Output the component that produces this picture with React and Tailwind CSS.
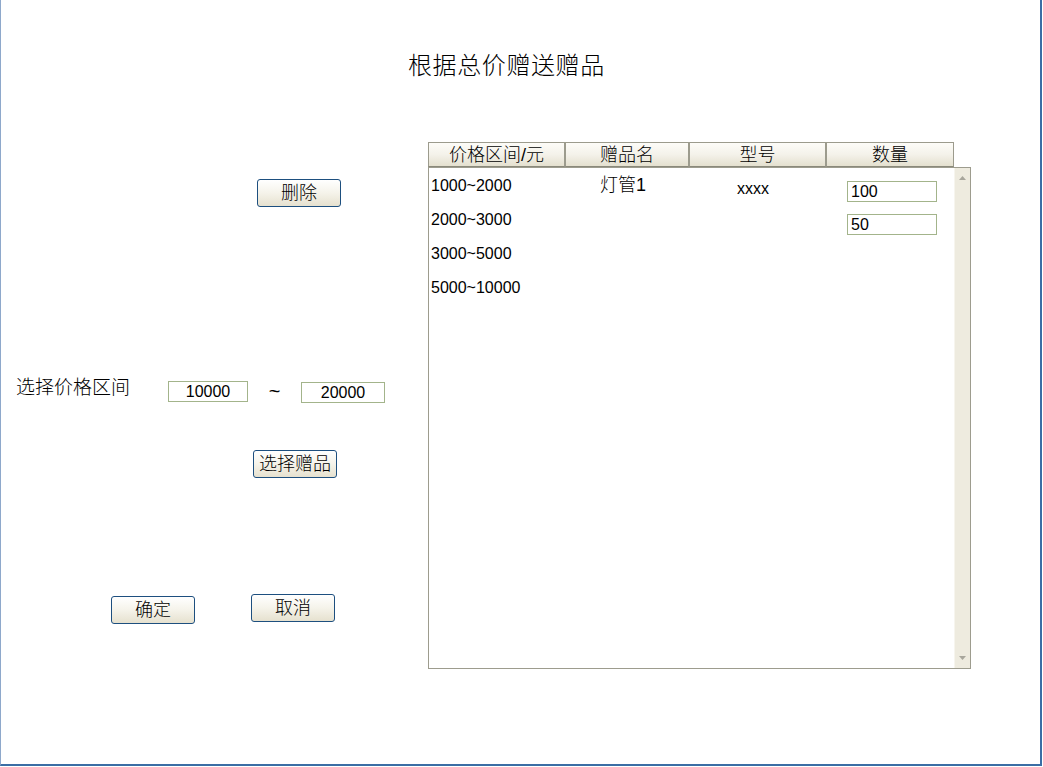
import React from "react";

const font = { fontFamily: '"Liberation Sans", "Noto Sans CJK SC", sans-serif' };

const rows = [
  { range: "1000~2000", name: "灯管1", model: "xxxx", qty: "100" },
  { range: "2000~3000", name: "", model: "", qty: "50" },
  { range: "3000~5000", name: "", model: "", qty: null },
  { range: "5000~10000", name: "", model: "", qty: null },
];

const XpButton = ({ children, className = "" }) => (
  <button
    type="button"
    className={
      "w-[84px] h-[28px] rounded-[3px] border border-[#1d4f7f] bg-gradient-to-b from-[#ffffff] via-[#f5f3ea] to-[#e6e1cf] text-[18px] leading-[26px] font-light text-black " +
      className
    }
  >
    {children}
  </button>
);

const HeaderCell = ({ children, w }) => (
  <div
    className={
      "h-[25px] flex items-center justify-center border border-[#9c9b8d] border-b-[#8a897b] bg-gradient-to-b from-[#fdfcf8] via-[#f4f2ea] to-[#e4e0cf] text-[18px] leading-[22px] font-light text-black " +
      w
    }
  >
    {children}
  </div>
);

export default function App() {
  return (
    <div
      style={font}
      className="w-[1042px] h-[766px] bg-white border-l border-l-[#8ea8cb] border-r-2 border-r-[#3b6ea5] border-b-2 border-b-[#3b6ea5] overflow-hidden"
    >
      {/* Title */}
      <div className="h-[142px] pt-[52px] pl-[407px]">
        <h1 className="text-[24px] leading-[28px] tracking-[0.6px] font-light text-black">
          根据总价赠送赠品
        </h1>
      </div>

      <div className="flex">
        {/* Left form */}
        <div className="w-[427px] flex flex-col">
          <XpButton className="mt-[37px] ml-[256px]">删除</XpButton>

          <div className="mt-[174px] flex items-start">
            <span className="ml-[15px] w-[152px] text-[19px] leading-[16px] -mt-[1px] font-light text-black">
              选择价格区间
            </span>
            <input
              readOnly
              value="10000"
              className="w-[80px] h-[21px] border border-[#a3b48b] text-center text-[16px] leading-[19px] outline-none"
            />
            <span className="w-[53px] text-center text-[20px] leading-[20px]">~</span>
            <input
              readOnly
              value="20000"
              className="mt-px w-[84px] h-[21px] border border-[#a3b48b] text-center text-[16px] leading-[19px] outline-none"
            />
          </div>

          <XpButton className="mt-[47px] ml-[252px]">选择赠品</XpButton>

          <div className="mt-[116px] flex items-start">
            <XpButton className="mt-[2px] ml-[110px]">确定</XpButton>
            <XpButton className="ml-[56px]">取消</XpButton>
          </div>
        </div>

        {/* Right table */}
        <div className="w-[543px] flex flex-col">
          <div className="flex w-[526px]">
            <HeaderCell w="w-[137px]">价格区间/元</HeaderCell>
            <HeaderCell w="w-[124px]">赠品名</HeaderCell>
            <HeaderCell w="w-[137px]">型号</HeaderCell>
            <HeaderCell w="w-[128px]">数量</HeaderCell>
          </div>
          <div className="h-[502px] border border-[#9d9c8e] flex">
            <div className="flex-1 pt-[8px] pl-[2px]">
              {rows.map((r) => (
                <div key={r.range} className="h-[34px] flex items-start text-black">
                  <span className="w-[169px] text-[16px] leading-[20px]">{r.range}</span>
                  <span className="w-[137px] text-[18px] leading-[20px] -mt-[1px] font-light">{r.name}</span>
                  <span className="w-[110px] text-[16px] leading-[20px] pt-[3px]">{r.model}</span>
                  {r.qty !== null && (
                    <input
                      readOnly
                      value={r.qty}
                      className={
                        (r.qty === "100" ? "mt-[5px]" : "mt-[4px]") +
                        " w-[90px] h-[21px] border border-[#a3b48b] px-[3px] text-[16px] leading-[19px] outline-none"
                      }
                    />
                  )}
                </div>
              ))}
            </div>
            <div className="w-[16px] bg-[#eeebdf] border-l border-l-[#f7f5ee] flex flex-col items-center justify-between py-[8px]">
              <svg width="7" height="4" viewBox="0 0 7 4">
                <path d="M3.5 0 L7 4 L0 4 Z" fill="#a8a69c" />
              </svg>
              <svg width="7" height="4" viewBox="0 0 7 4">
                <path d="M0 0 L7 0 L3.5 4 Z" fill="#a8a69c" />
              </svg>
            </div>
          </div>
        </div>
      </div>
    </div>
  );
}
